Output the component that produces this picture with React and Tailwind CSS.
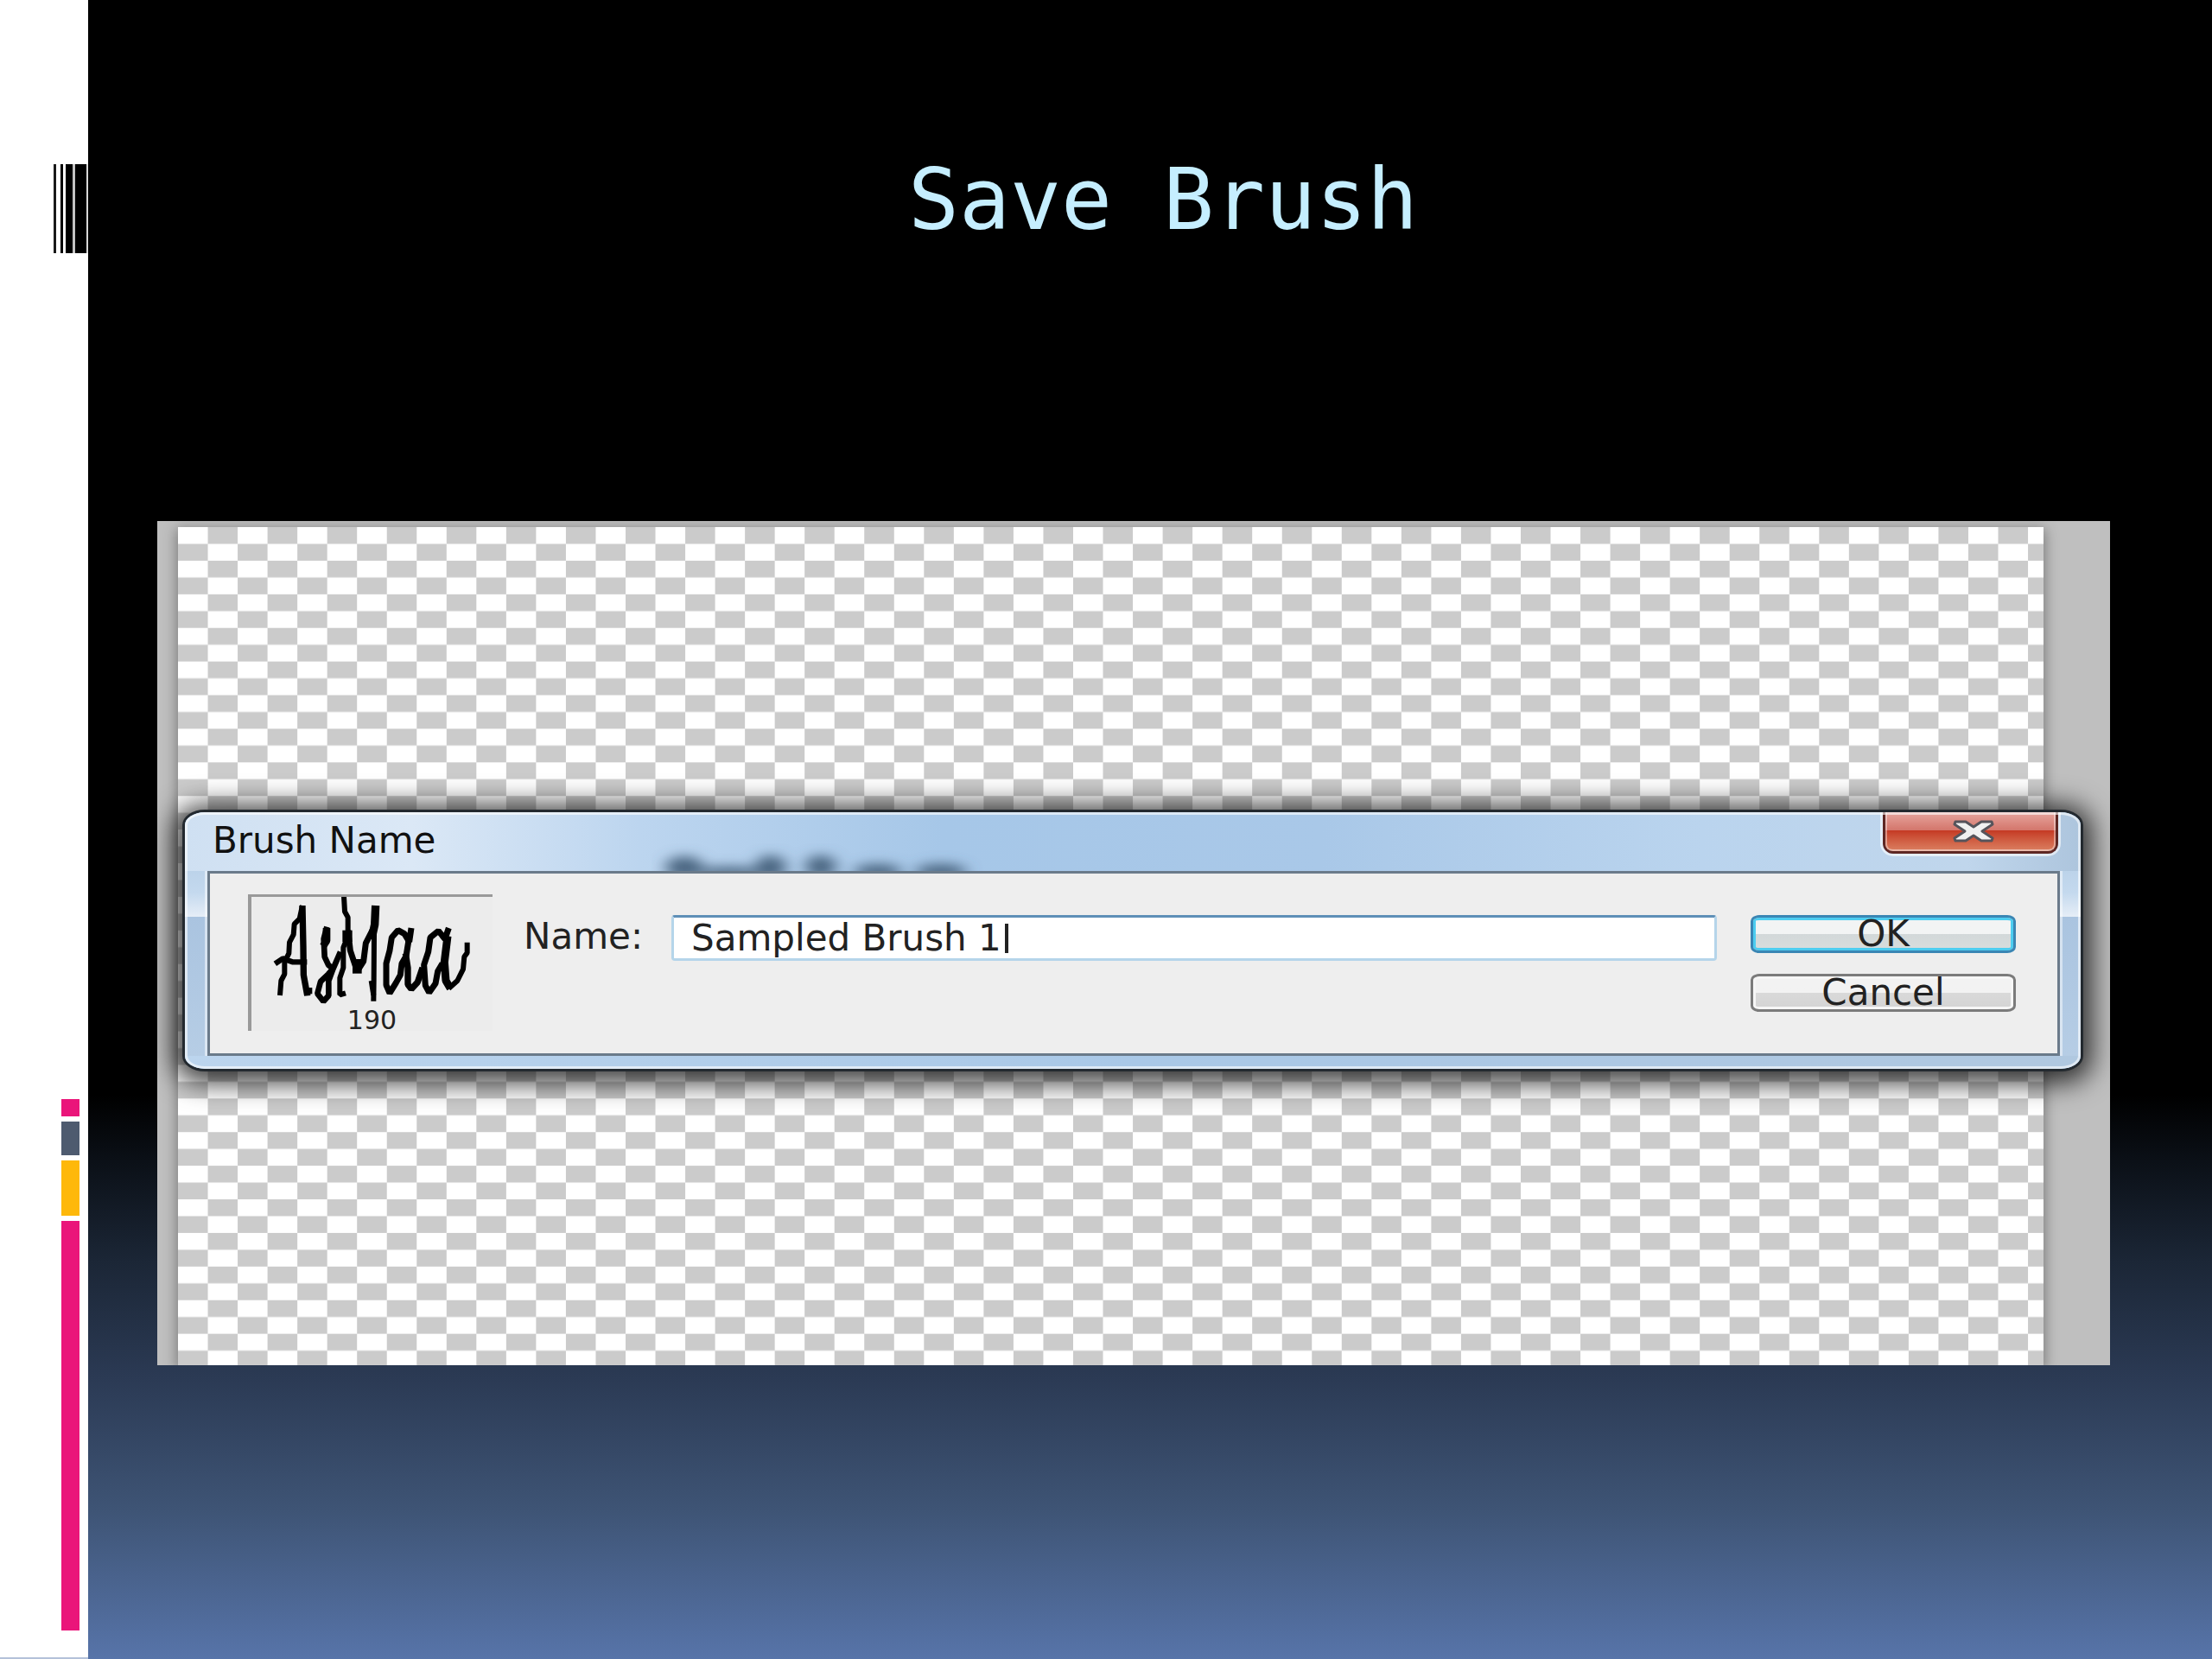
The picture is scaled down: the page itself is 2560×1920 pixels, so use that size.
const barcode = [
  "w-[3px] bg-[#1a1a1a]",
  "ml-[5px] w-[3px] bg-black",
  "ml-[3px] w-2 bg-black",
  "w-[3px] bg-[#c4c4c4]",
  "w-[13px] bg-black",
  "w-0.5 bg-[#d8d8d8]",
]

const swatches = [
  "h-5 bg-[#ea157a]",
  "h-[39px] bg-[#4e5b6f]",
  "h-16 bg-[#feb80a]",
  "h-[474px] bg-[#ea157a]",
]

function Sidebar() {
  return (
    <aside className="flex w-[102px] shrink-0 flex-col border-b-2 border-[#b4c1d9] bg-white pt-[190px]">
      <div className="ml-[62px] flex h-[103px]">
        {barcode.map((bar) => (
          <div key={bar} className={bar}></div>
        ))}
      </div>
      <div className="mt-auto mb-[31px] ml-[71px] flex w-[21px] flex-col gap-1.5">
        {swatches.map((swatch) => (
          <div key={swatch} className={swatch}></div>
        ))}
      </div>
    </aside>
  )
}

// Transparent document, one unit per square
function Checkerboard() {
  return (
    <svg
      className="h-full w-full bg-white"
      viewBox="0 0 62.52 49.87"
      preserveAspectRatio="none"
      aria-hidden="true"
    >
      <defs>
        <pattern id="squares" width="2" height="2" patternUnits="userSpaceOnUse">
          <path d="M1 0h1v1h-1zM0 1h1v1h-1z" fill="#cbcbcb" />
        </pattern>
      </defs>
      <rect width="62.52" height="49.87" fill="url(#squares)" />
    </svg>
  )
}

function BrushPreview() {
  return (
    <figure className="relative h-[158px] w-[283px] shrink-0 border-t-[3px] border-l-4 border-[#999999] bg-[#ececec]">
      <svg
        className="h-full w-full"
        viewBox="63 54 837 465"
        preserveAspectRatio="none"
        fill="none"
        stroke="#000"
        strokeWidth="18"
        strokeLinejoin="bevel"
        role="img"
        aria-label="Brush tip"
      >
        <path d="M162 396L166 345L178 322V280L193 250L195 212L209 185L212 148L230 130L240 84" />
        <path d="M240 84L243 230L244 325L257 396L257 380H274" strokeWidth="22" />
        <path d="M145 286L172 268L205 280H256" strokeWidth="19" />
        <path d="M325 158L314 200L317 262L330 290L346 304L330 322L303 348L292 390L313 417L331 397V345L346 305L372 245" strokeWidth="20" />
        <path d="M324 162V206L312 225" strokeWidth="26" />
        <path d="M384 52L387 105L398 125V190L382 230V300L370 335V394L390 388" />
        <path d="M398 170L406 240L430 312L452 278L460 215L483 170" strokeWidth="21" />
        <path d="M396 170V210" strokeWidth="34" />
        <path d="M430 270V320" strokeWidth="32" />
        <path d="M494 84L491 150L480 200" strokeWidth="28" />
        <path d="M489 180L488 340L487 416" strokeWidth="18" />
        <path d="M479 345L487 395" strokeWidth="18" />
        <path d="M618 162L611 210L594 182L572 170L550 195L543 240L531 285V360L543 388L565 352L580 325L585 285L600 260L608 210" strokeWidth="21" />
        <path d="M598 250L606 300V358L618 374L640 350L657 300" strokeWidth="22" />
        <path d="M748 162L735 200L712 172L684 195L677 245L662 290L667 362L680 386L702 355L710 312L726 285" strokeWidth="21" />
        <path d="M744 190L733 280L738 345L754 372" strokeWidth="27" />
        <path d="M748 372L778 345L798 305L802 262L812 248V212" />
      </svg>
      <figcaption className="absolute inset-x-0 -bottom-0.5 text-center text-[30px] leading-7 text-[#222]">
        190
      </figcaption>
    </figure>
  )
}

function CloseButton() {
  return (
    <button
      type="button"
      aria-label="Close"
      className="flex h-12 w-[203px] items-center justify-center rounded-b-xl border-x-[3px] border-b-[3px] border-[#5e2723] bg-linear-to-b from-[#e6a59e] via-[#d4776d] via-45% to-[#dd8a70] shadow-[0_0_0_3px_rgba(255,255,255,0.6)]"
    >
      <span className="flex h-full w-full items-center justify-center rounded-b-lg border-2 border-t-0 border-white/40 bg-linear-to-b from-transparent from-50% via-[#c53a24] via-50% to-[#d97a5c] pl-1.5">
        <svg className="h-7 w-[50px]" viewBox="0 0 50 28" aria-hidden="true">
          <path
            d="M4 3H16L25 9L34 3H46L47 6L35 14L47 22L46 25H34L25 19L16 25H4L3 22L15 14L3 6Z"
            fill="#f1f1f1"
            stroke="#56545b"
            strokeWidth="3"
            strokeLinejoin="round"
          />
        </svg>
      </span>
    </button>
  )
}

function TitleBar() {
  return (
    <header className="relative flex h-[68px] items-start justify-between overflow-hidden bg-[linear-gradient(90deg,#cfe0f2_0%,#dbe8f6_12%,#bcd5ef_24%,#a6c7e8_40%,#a9c8e8_60%,#bad4ee_80%,#c0d6ec_94%,#adc5dd_100%)] pr-[26px] pl-8">
      {/* Document behind the glass */}
      <svg className="absolute bottom-0 left-[540px] h-9 w-[400px]" viewBox="0 0 400 36" aria-hidden="true">
        <defs>
          <filter id="glass" x="-20%" y="-50%" width="140%" height="200%">
            <feGaussianBlur stdDeviation="9 7" />
          </filter>
        </defs>
        <g fill="#4a6580" filter="url(#glass)">
          <ellipse cx="38" cy="32" rx="22" ry="13" />
          <ellipse cx="90" cy="38" rx="40" ry="7" />
          <ellipse cx="138" cy="32" rx="18" ry="14" />
          <ellipse cx="196" cy="31" rx="18" ry="13" />
          <ellipse cx="262" cy="37" rx="28" ry="9" />
          <ellipse cx="335" cy="37" rx="30" ry="9" />
        </g>
      </svg>
      <h2 className="relative mt-2.5 text-[42px] leading-[46px] text-[#111]">Brush Name</h2>
      <CloseButton />
    </header>
  )
}

function BrushNameDialog() {
  return (
    <div
      role="dialog"
      aria-label="Brush Name"
      className="relative overflow-hidden rounded-[26px/18px] border-[3px] border-[#23292f] bg-[#abc8e6] shadow-[0_4px_30px_10px_rgba(0,0,0,0.75)]"
    >
      <TitleBar />
      <div className="bg-[linear-gradient(180deg,#bcd3ea_0px,#c4d9ee_25px,#e6eef7_53px,#aac4e0_53px,#b6cde5_100%)] pr-6 pl-[26px]">
        <form
          className="flex h-[214px] items-start border-[3px] border-[#6a7a8a] bg-[#eeeeee] pt-6 pr-12 pl-11 shadow-[0_0_0_3px_rgba(255,255,255,0.5)]"
          onSubmit={(e) => e.preventDefault()}
        >
          <BrushPreview />
          <label htmlFor="brush-name" className="mt-6 ml-9 w-[171px] shrink-0 text-[42px] leading-[50px] text-[#222]">
            Name:
          </label>
          <div className="mt-6 flex h-[53px] min-w-0 flex-1 items-center rounded-sm border-[3px] border-[#b5d5ea] border-t-[#5e8fb7] bg-white pl-5">
            <input
              id="brush-name"
              type="text"
              defaultValue="Sampled Brush 1"
              className="field-sizing-content h-11 text-[42px] leading-[44px] text-[#222] outline-none"
            />
            <span className="ml-1 h-[34px] w-1 bg-[#222]"></span>
          </div>
          <div className="mt-6 ml-[39px] flex w-[307px] shrink-0 flex-col gap-6">
            <button
              type="submit"
              className="flex h-11 items-center justify-center rounded-[10px/7px] border-[3px] border-[#3a86b4] bg-linear-to-b from-[#f2f4f4] from-50% via-[#d2d8d9] via-50% to-[#d8dddd] text-[42px] leading-[38px] text-[#222] shadow-[inset_0_0_0_3px_#4dcdf0]"
            >
              OK
            </button>
            <button
              type="button"
              className="flex h-11 items-center justify-center rounded-[10px/7px] border-[3px] border-[#7b7b7b] bg-linear-to-b from-[#f2f2f2] from-50% via-[#d9d9d9] via-50% to-[#d4d4d4] text-[42px] leading-[38px] text-[#222] shadow-[inset_0_0_0_3px_#f6f6f6]"
            >
              Cancel
            </button>
          </div>
        </form>
      </div>
      <div className="h-[15px] bg-linear-to-r from-[#bcd5ee] via-[#a9c8e7] to-[#b0c8e0]"></div>
      {/* Light edge inside the window frame */}
      <div className="pointer-events-none absolute inset-0 rounded-[23px/15px] border-[3px] border-white/60"></div>
    </div>
  )
}

export default function App() {
  return (
    <div className="flex min-h-screen bg-white">
      <Sidebar />
      <main className="min-w-0 flex-1 bg-[linear-gradient(180deg,#000_66%,#0b1017_70%,#1b2636_76%,#2b3a54_83%,#3e5475_91%,#5774a9_100%)] pr-[118px] pl-20">
        <h1 className="mb-[316px] pt-[175px] pl-[68px] text-center font-['DejaVu_Sans_Mono',monospace] text-[98px] leading-[112px] text-[#c5eeff]">
          Save Brush
        </h1>
        <section className="relative overflow-hidden bg-[#bfbfbf] pt-[334px] pr-[31px] pb-[340px] pl-[29px] font-['DejaVu_Sans',sans-serif]">
          <div className="absolute top-[7px] right-[77px] bottom-0 left-6 shadow-[0_4px_14px_2px_rgba(0,0,0,0.35)]">
            <Checkerboard />
          </div>
          <BrushNameDialog />
        </section>
      </main>
    </div>
  )
}
